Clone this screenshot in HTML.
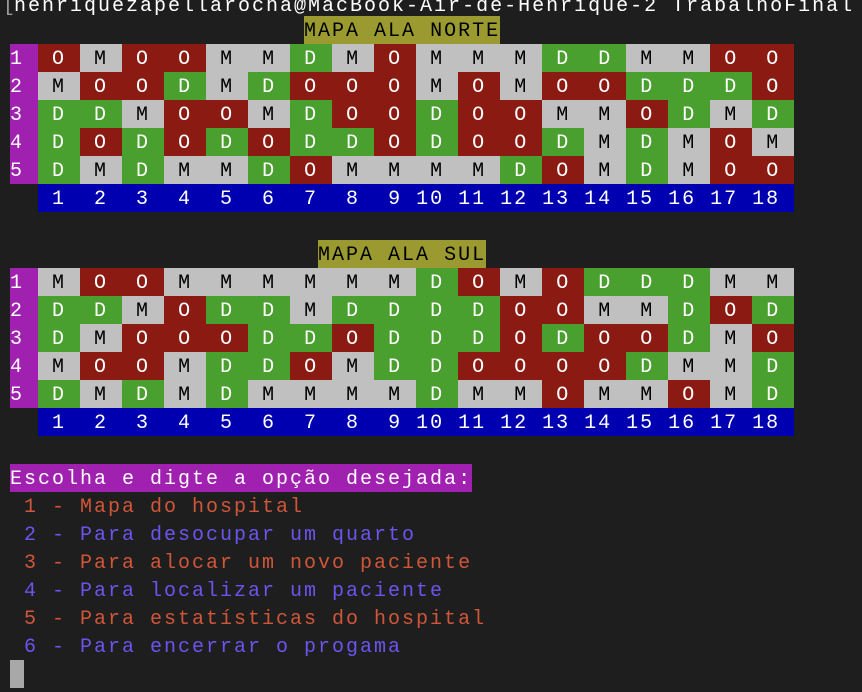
<!DOCTYPE html>
<html><head><meta charset="utf-8"><style>
html,body{margin:0;padding:0;background:#1e1e1e;width:862px;height:692px;overflow:hidden}
.l{position:absolute;left:10px;height:28px;line-height:31px;font-family:"Liberation Mono",monospace;font-size:20px;letter-spacing:2px;white-space:pre;color:#fff}
.l span{display:inline-block;height:28px;overflow:hidden;vertical-align:top}
.o{background:#8b1a12;color:#fff}
.m{background:#c0c0c0;color:#000}
.d{background:#4aa02e;color:#fff}
.p{background:#a020b0;color:#fff}
.b{background:#0000b0;color:#fff}
.t{background:#9a9a30;color:#000}
.r{color:#d0563a}
.u{color:#6a55ee}
</style></head><body>
<div class="l" style="top:-9px;left:3px;color:#999">[</div>
<div class="l" style="top:-9px;left:14px">henriquezapellarocha@MacBook-Air-de-Henrique-2 TrabalhoFinal</div>

<div class="l" style="top:16px">                     <span class="t">MAPA ALA NORTE</span></div>
<div class="l" style="top:44px"><span class="p">1 </span><span class="o"> O </span><span class="m"> M </span><span class="o"> O </span><span class="o"> O </span><span class="m"> M </span><span class="m"> M </span><span class="d"> D </span><span class="m"> M </span><span class="o"> O </span><span class="m"> M </span><span class="m"> M </span><span class="m"> M </span><span class="d"> D </span><span class="d"> D </span><span class="m"> M </span><span class="m"> M </span><span class="o"> O </span><span class="o"> O </span></div>
<div class="l" style="top:72px"><span class="p">2 </span><span class="m"> M </span><span class="o"> O </span><span class="o"> O </span><span class="d"> D </span><span class="m"> M </span><span class="d"> D </span><span class="o"> O </span><span class="o"> O </span><span class="o"> O </span><span class="m"> M </span><span class="o"> O </span><span class="m"> M </span><span class="o"> O </span><span class="o"> O </span><span class="d"> D </span><span class="d"> D </span><span class="d"> D </span><span class="o"> O </span></div>
<div class="l" style="top:100px"><span class="p">3 </span><span class="d"> D </span><span class="d"> D </span><span class="m"> M </span><span class="o"> O </span><span class="o"> O </span><span class="m"> M </span><span class="d"> D </span><span class="o"> O </span><span class="o"> O </span><span class="d"> D </span><span class="o"> O </span><span class="o"> O </span><span class="m"> M </span><span class="m"> M </span><span class="o"> O </span><span class="d"> D </span><span class="m"> M </span><span class="d"> D </span></div>
<div class="l" style="top:128px"><span class="p">4 </span><span class="d"> D </span><span class="o"> O </span><span class="d"> D </span><span class="o"> O </span><span class="d"> D </span><span class="o"> O </span><span class="d"> D </span><span class="d"> D </span><span class="o"> O </span><span class="d"> D </span><span class="o"> O </span><span class="o"> O </span><span class="d"> D </span><span class="m"> M </span><span class="d"> D </span><span class="m"> M </span><span class="o"> O </span><span class="m"> M </span></div>
<div class="l" style="top:156px"><span class="p">5 </span><span class="d"> D </span><span class="m"> M </span><span class="d"> D </span><span class="m"> M </span><span class="m"> M </span><span class="d"> D </span><span class="o"> O </span><span class="m"> M </span><span class="m"> M </span><span class="m"> M </span><span class="m"> M </span><span class="d"> D </span><span class="o"> O </span><span class="m"> M </span><span class="d"> D </span><span class="m"> M </span><span class="o"> O </span><span class="o"> O </span></div>
<div class="l" style="top:184px">  <span class="b"> 1  2  3  4  5  6  7  8  9 10 11 12 13 14 15 16 17 18 </span></div>

<div class="l" style="top:240px">                      <span class="t">MAPA ALA SUL</span></div>
<div class="l" style="top:268px"><span class="p">1 </span><span class="m"> M </span><span class="o"> O </span><span class="o"> O </span><span class="m"> M </span><span class="m"> M </span><span class="m"> M </span><span class="m"> M </span><span class="m"> M </span><span class="m"> M </span><span class="d"> D </span><span class="o"> O </span><span class="m"> M </span><span class="o"> O </span><span class="d"> D </span><span class="d"> D </span><span class="d"> D </span><span class="m"> M </span><span class="m"> M </span></div>
<div class="l" style="top:296px"><span class="p">2 </span><span class="d"> D </span><span class="d"> D </span><span class="m"> M </span><span class="o"> O </span><span class="d"> D </span><span class="d"> D </span><span class="m"> M </span><span class="d"> D </span><span class="d"> D </span><span class="d"> D </span><span class="d"> D </span><span class="o"> O </span><span class="o"> O </span><span class="m"> M </span><span class="m"> M </span><span class="d"> D </span><span class="o"> O </span><span class="d"> D </span></div>
<div class="l" style="top:324px"><span class="p">3 </span><span class="d"> D </span><span class="m"> M </span><span class="o"> O </span><span class="o"> O </span><span class="o"> O </span><span class="d"> D </span><span class="d"> D </span><span class="o"> O </span><span class="d"> D </span><span class="d"> D </span><span class="d"> D </span><span class="o"> O </span><span class="d"> D </span><span class="o"> O </span><span class="o"> O </span><span class="d"> D </span><span class="m"> M </span><span class="o"> O </span></div>
<div class="l" style="top:352px"><span class="p">4 </span><span class="m"> M </span><span class="o"> O </span><span class="o"> O </span><span class="m"> M </span><span class="d"> D </span><span class="d"> D </span><span class="o"> O </span><span class="m"> M </span><span class="d"> D </span><span class="d"> D </span><span class="o"> O </span><span class="o"> O </span><span class="o"> O </span><span class="o"> O </span><span class="d"> D </span><span class="m"> M </span><span class="m"> M </span><span class="d"> D </span></div>
<div class="l" style="top:380px"><span class="p">5 </span><span class="d"> D </span><span class="m"> M </span><span class="d"> D </span><span class="m"> M </span><span class="d"> D </span><span class="m"> M </span><span class="m"> M </span><span class="m"> M </span><span class="m"> M </span><span class="d"> D </span><span class="m"> M </span><span class="m"> M </span><span class="o"> O </span><span class="m"> M </span><span class="m"> M </span><span class="o"> O </span><span class="m"> M </span><span class="d"> D </span></div>
<div class="l" style="top:408px">  <span class="b"> 1  2  3  4  5  6  7  8  9 10 11 12 13 14 15 16 17 18 </span></div>

<div class="l" style="top:464px"><span class="p">Escolha e digte a opção desejada:</span></div>
<div class="l r" style="top:492px"> 1 - Mapa do hospital</div>
<div class="l u" style="top:520px"> 2 - Para desocupar um quarto</div>
<div class="l r" style="top:548px"> 3 - Para alocar um novo paciente</div>
<div class="l u" style="top:576px"> 4 - Para localizar um paciente</div>
<div class="l r" style="top:604px"> 5 - Para estatísticas do hospital</div>
<div class="l u" style="top:632px"> 6 - Para encerrar o progama</div>
<div style="position:absolute;left:10px;top:660px;width:14px;height:28px;background:#a8a8a8"></div>
</body></html>
